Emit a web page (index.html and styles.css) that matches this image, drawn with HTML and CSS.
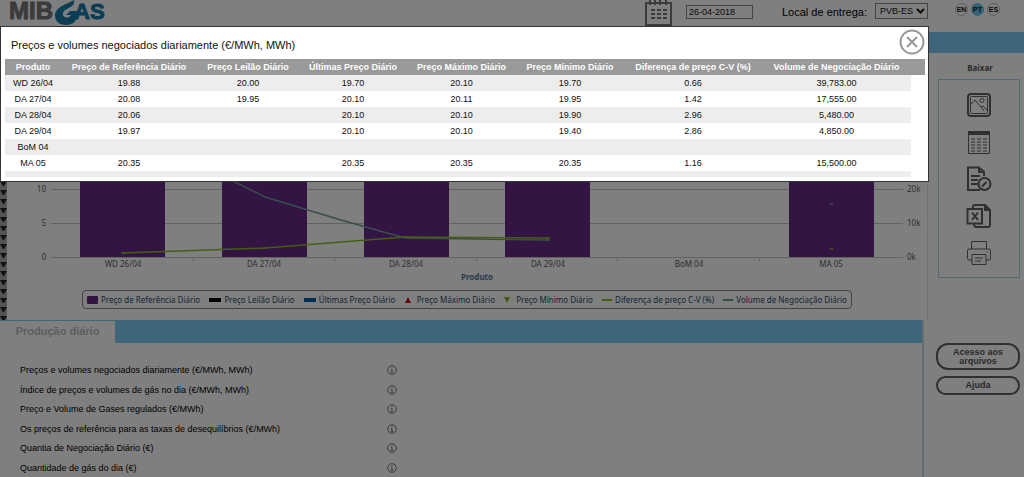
FILE: index.html
```html
<!DOCTYPE html>
<html lang="pt">
<head>
<meta charset="utf-8">
<title>MIBGAS</title>
<meta name="viewport" content="width=device-width, initial-scale=1">
<link rel="stylesheet" href="styles.css">
</head>
<body>
<div class="page">
  <header class="header">
    <a class="logo" href="#" aria-label="MIBGAS">
      <svg class="logo-svg" viewBox="0 0 110 30" aria-hidden="true">
        <text class="logo-grey" x="0" y="19">MIB</text>
        <text class="logo-blue" x="65" y="19">AS</text>
        <path class="logo-drop" d="M65 0C58 4 46 7 46 15.500C46 21 50 25 57 25C63 25 67 22 68 17L69 11H61L57 15H62C60 18 58 18 56 17C52 15 54 11 58 9C62 7 66 5 65 0Z"/>
      </svg>
    </a>
    <div class="filters">
      <svg class="calendar" viewBox="0 0 27 27" aria-hidden="true">
        <path class="stroke" d="M1 3H26V25H1ZM5 0V5M10 0V5M15 0V5M21 0V5"/>
        <path class="dots" d="M6 10H22M6 14H22M6 18H22"/>
      </svg>
      <input class="date" type="text" value="26-04-2018" aria-label="Data">
      <label class="place-label" for="place">Local de entrega:</label>
      <div class="place-box">
        <select class="place" id="place"><option>PVB-ES</option></select>
        <svg class="chevron" viewBox="0 0 9 6" aria-hidden="true"><path d="M1 1L4.500 4.500L8 1"/></svg>
      </div>
    </div>
    <nav class="langs"><a class="lang" href="#">EN</a><a class="lang lang-on" href="#">PT</a><a class="lang" href="#">ES</a></nav>
  </header>
  <div class="band"></div>
  <div class="columns">
    <main class="main">
      <section class="chart-area">
        <svg class="strip" aria-hidden="true"><defs><pattern id="hatch" width="7" height="9" patternUnits="userSpaceOnUse"><rect class="strip-bg" width="7" height="9"/><path class="strip-mark" d="M0 2H7L4 7H3Z"/></pattern></defs><rect width="7" height="100%" fill="url(#hatch)"/></svg>
        <div class="chart">
          <svg class="plot" viewBox="0 0 920 231" role="img" aria-label="Preços e volumes por produto">
            <path class="grid" d="M44 136.500H896M44 170.500H896M44 204.500H896M186.500 205V208M327.500 205V208M469.500 205V208M610.500 205V208M752.500 205V208"/>
            <path class="bar" d="M73 68H158V204H73ZM215 68H300V204H215ZM357 68H442V204H357ZM498 68H583V204H498ZM782 68H867V204H782Z"/>
            <path class="volume" d="M116 68L222 126L258 144L334 167L398 185L541 187"/>
            <path class="spread" d="M116 200L258 195L398 184L541 185"/>
            <path class="spread" d="M114 200H118M256 195H260M396 184H400M539 185H543M823 196H826"/>
            <path class="volume" d="M823 151H826M539 187H543"/>
            <g class="axis axis-left"><text x="39" y="139">10</text><text x="39" y="173">5</text><text x="39" y="207">0</text></g>
            <g class="axis"><text x="900" y="139">20k</text><text x="900" y="173">10k</text><text x="900" y="207">0k</text></g>
            <g class="axis axis-mid"><text x="116" y="214">WD 26/04</text><text x="257" y="214">DA 27/04</text><text x="399" y="214">DA 28/04</text><text x="541" y="214">DA 29/04</text><text x="682" y="214">BoM 04</text><text x="824" y="214">MA 05</text></g>
            <text class="axis-title" x="470" y="227">Produto</text>
          </svg>
          <ul class="legend">
            <li class="key"><i class="box"></i>Preço de Referência Diário</li>
            <li class="key"><i class="dash black"></i>Preço Leilão Diário</li>
            <li class="key"><i class="dash blue"></i>Últimas Preço Diário</li>
            <li class="key gap"><i class="up"></i>Preço Máximo Diário</li>
            <li class="key gap"><i class="down"></i>Preço Mínimo Diário</li>
            <li class="key"><i class="line green"></i>Diferença de preço C-V (%)</li>
            <li class="key"><i class="line slate"></i>Volume de Negociação Diário</li>
          </ul>
        </div>
      </section>
      <section class="reports">
        <div class="tabs"><h2 class="tab">Produção diário</h2></div>
        <ul class="list">
          <li class="item"><a class="item-link" href="#">Preços e volumes negociados diariamente (€/MWh, MWh)</a><svg class="info" viewBox="0 0 10 10"><use href="#info"/></svg></li>
          <li class="item"><a class="item-link" href="#">Índice de preços e volumes de gás no dia (€/MWh, MWh)</a><svg class="info" viewBox="0 0 10 10"><use href="#info"/></svg></li>
          <li class="item"><a class="item-link" href="#">Preço e Volume de Gases regulados (€/MWh)</a><svg class="info" viewBox="0 0 10 10"><use href="#info"/></svg></li>
          <li class="item"><a class="item-link" href="#">Os preços de referência para as taxas de desequilíbrios (€/MWh)</a><svg class="info" viewBox="0 0 10 10"><use href="#info"/></svg></li>
          <li class="item"><a class="item-link" href="#">Quantia de Negociação Diário (€)</a><svg class="info" viewBox="0 0 10 10"><use href="#info"/></svg></li>
          <li class="item"><a class="item-link" href="#">Quantidade de gás do dia (€)</a><svg class="info" viewBox="0 0 10 10"><use href="#info"/></svg></li>
        </ul>
      </section>
    </main>
    <aside class="side">
      <h3 class="side-title">Baixar</h3>
      <div class="downloads">
        <button class="dl" aria-label="Imagem"><svg class="dl-svg" viewBox="0 0 26 26"><rect class="stroke" x="2" y="2" width="22" height="22" rx="3"/><rect class="thin" x="4.500" y="4.500" width="17" height="17" rx="1"/><circle class="thin" cx="16" cy="8.500" r="2"/><path class="thin" d="M5 12L9 8L15 15L17 14L21 18M15 15L18 19"/></svg></button>
        <button class="dl" aria-label="Tabela"><svg class="dl-svg" viewBox="0 0 26 26"><path class="solid" d="M2 2H24V6H2Z"/><path class="thin" d="M2.500 2V24.500H23.500V2"/><path class="cells" d="M5 10H21M5 13H21M5 16H21M5 19H21M5 22H21"/></svg></button>
        <button class="dl" aria-label="Documento"><svg class="dl-svg" viewBox="0 0 26 26"><path class="stroke" d="M18 10V6L13 1.500H2V24H14M13 2V6H18M5 10H14M5 14H12M5 18H12"/><circle class="stroke" cx="18.500" cy="18" r="6"/><path class="stroke" d="M16 20.500L20.500 16"/></svg></button>
        <button class="dl" aria-label="Excel"><svg class="dl-svg" viewBox="0 0 26 26"><path class="stroke" d="M7 6V4Q7 2 9 2H19L24 7V22Q24 24 22 24H10Q8 24 8 21"/><path class="solid" d="M18 1V8H25Z"/><path class="stroke" d="M1.500 6H16V20.500H1.500Z"/><path class="xls" d="M6 9.500L12 17M12 9.500L6 17"/></svg></button>
        <button class="dl" aria-label="Imprimir"><svg class="dl-svg" viewBox="0 0 26 26"><path class="thin" d="M5.500 9V1.500H20.500V9M6 20H3Q1.500 20 1.500 18.500V10.500Q1.500 9 3 9H23Q24.500 9 24.500 10.500V18.500Q24.500 20 23 20H20M6 14.500H20V24.500H6ZM9 18H17M9 21H15M21 12H22"/></svg></button>
      </div>
      <div class="actions"><button class="pill">Acesso aos arquivos</button><button class="pill">Ajuda</button></div>
    </aside>
  </div>
</div>
<svg class="sprite" aria-hidden="true"><symbol id="info" viewBox="0 0 10 10"><circle class="info-line" cx="5" cy="5" r="4.300"/><path class="info-line" d="M5 2V3M4 4.300H5V7.500M3.800 7.500H6.200"/></symbol></svg>
<div class="overlay"></div>
<div class="modal" role="dialog" aria-labelledby="modal-title">
  <button class="close" aria-label="Fechar"><svg class="close-svg" viewBox="0 0 26 26"><circle cx="13" cy="13" r="11.500"/><path d="M8 8L18 18M18 8L8 18"/></svg></button>
  <h1 class="modal-title" id="modal-title">Preços e volumes negociados diariamente (€/MWh, MWh)</h1>
  <div class="scroller">
    <table class="prices">
      <colgroup><col class="c1"><col class="c2"><col class="c3"><col class="c4"><col class="c5"><col class="c6"><col class="c7"><col class="c8"><col class="c9"></colgroup>
      <thead><tr><th>Produto</th><th>Preço de Referência Diário</th><th>Preço Leilão Diário</th><th>Últimas Preço Diário</th><th>Preço Máximo Diário</th><th>Preço Mínimo Diário</th><th>Diferença de preço C-V (%)</th><th>Volume de Negociação Diário</th><td></td></tr></thead>
      <tbody>
        <tr><td>WD 26/04</td><td>19.88</td><td>20.00</td><td>19.70</td><td>20.10</td><td>19.70</td><td>0.66</td><td>39,783.00</td></tr>
        <tr><td>DA 27/04</td><td>20.08</td><td>19.95</td><td>20.10</td><td>20.11</td><td>19.95</td><td>1.42</td><td>17,555.00</td></tr>
        <tr><td>DA 28/04</td><td>20.06</td><td></td><td>20.10</td><td>20.10</td><td>19.90</td><td>2.96</td><td>5,480.00</td></tr>
        <tr><td>DA 29/04</td><td>19.97</td><td></td><td>20.10</td><td>20.10</td><td>19.40</td><td>2.86</td><td>4,850.00</td></tr>
        <tr><td>BoM 04</td><td></td><td></td><td></td><td></td><td></td><td></td><td></td></tr>
        <tr><td>MA 05</td><td>20.35</td><td></td><td>20.35</td><td>20.35</td><td>20.35</td><td>1.16</td><td>15,500.00</td></tr>
        <tr><td></td><td></td><td></td><td></td><td></td><td></td><td></td><td></td></tr>
      </tbody>
    </table>
  </div>
</div>
</body>
</html>
```
FILE: styles.css
```css
* { box-sizing: border-box; }
body {
  margin: 0;
  overflow: hidden;
  background: #fff;
  color: #111;
  font-family: "Liberation Sans", Arial, sans-serif;
  font-size: 9px;
}
button, input, select { font-family: inherit; color: inherit; }
ul { list-style: none; margin: 0; padding: 0; }
a { color: inherit; text-decoration: none; }
svg { display: block; }

.page { display: flex; flex-direction: column; min-height: 100vh; }
.header { display: flex; align-items: flex-start; height: 32px; padding-left: 9px; }
.logo-svg { width: 110px; height: 30px; overflow: visible; }
.logo-svg text { font-weight: 700; stroke-width: 1; }
.logo-grey { font-size: 24px; fill: #777; stroke: #777; }
.logo-blue { font-size: 22px; stroke: #1a7aa8; }
.logo-blue, .logo-drop { fill: #1a7aa8; }
.filters { display: flex; align-items: flex-start; margin-left: auto; }
.calendar { width: 27px; height: 27px; margin-right: 14px; }
.stroke { fill: none; stroke: #777; stroke-width: 2; }
.dots { stroke: #777; stroke-width: 2; stroke-dasharray: 4 2; }
.date { width: 67px; height: 14px; margin-top: 5px; padding: 0 2px; border: 1px solid #888; background: #fff; font-size: 9px; }
.place-label { margin: 5px 8px 0 29px; font-size: 11px; line-height: 14px; color: #000; }
.place-box { position: relative; margin-top: 3px; }
.place { display: block; appearance: none; width: 53px; height: 16px; padding: 0 0 0 4px; border: 1px solid #888; border-radius: 0; background: #fff; font-size: 9px; }
.chevron { position: absolute; top: 5px; right: 3px; width: 9px; height: 6px; fill: none; stroke: #111; stroke-width: 2; pointer-events: none; }
.langs { display: flex; justify-content: flex-start; gap: 3px; width: 96px; padding: 3px 0 0 27px; }
.lang { width: 13px; height: 13px; border: 1px solid #bbb; border-radius: 50%; font-size: 7px; font-weight: 700; line-height: 11px; text-align: center; }
.lang-on { background: #69c6ee; border-color: #69c6ee; }
.band { height: 21px; background: #7ecdf0; }

.columns { display: flex; flex: 1; }
.main { display: flex; flex-direction: column; flex: 1; min-width: 0; }
.chart-area { display: flex; border-right: 1px solid #e4e4e4; }
.strip { flex: none; width: 7px; height: 267px; }
.strip-bg { fill: #aaa; }
.strip-mark { fill: #222; }
.chart { flex: 1; min-width: 0; }
.plot { width: 100%; }
.grid { fill: none; stroke: #c4c4c4; }
.bar { fill: #662a86; }
.spread, .volume { fill: none; stroke-width: 1.5; }
.spread { stroke: #8bbc21; }
.volume { stroke: #7798a0; }
.axis text, .axis-title { font-family: "Noto Sans", "Open Sans", sans-serif; font-size: 8px; fill: #606060; }
.axis-left text { text-anchor: end; }
.axis-mid text, .axis-title { text-anchor: middle; }
.axis-title { fill: #4d759e; font-weight: 700; }
.legend { display: flex; align-items: center; justify-content: space-between; width: 770px; max-width: 100%; height: 19px; margin: 6px 0 11px 75px; padding: 0 4px; border: 1px solid #888; border-radius: 4px; font-family: "Noto Sans", "Open Sans", sans-serif; font-size: 8px; color: #274b6d; white-space: nowrap; }
.key { display: flex; align-items: center; gap: 3px; }
.key.gap { gap: 6px; }
.box { width: 11px; height: 8px; border-radius: 1px; background: #662a86; }
.dash { width: 12px; height: 4px; }
.black { background: #000; }
.blue { background: #0062a8; }
.up, .down { border: 3px solid transparent; }
.up { border-bottom: 6px solid #c00; border-top: 0; }
.down { border-top: 6px solid #7ab030; border-bottom: 0; }
.line { width: 10px; height: 2px; }
.green { background: #8bbc21; }
.slate { background: #7798a0; }

.reports { flex: 1; margin-right: 4px; border-right: 2px solid #c4dde8; }
.tabs { height: 23px; border-top: 1px solid #7ecdf0; background: #7ecdf0; }
.tab { width: 115px; height: 22px; margin: 0; background: #fff; color: #bbb; font-size: 11px; line-height: 21px; text-align: center; }
.list { padding: 17px 20px 0; color: #000; }
.item { display: flex; align-items: center; height: 20px; }
.item:nth-child(even) { height: 19px; }
.item-link { width: 367px; }
.info { width: 10px; height: 10px; }
.info-line { fill: none; stroke: #777; stroke-width: 1; }
.sprite { position: absolute; width: 0; height: 0; }

.side { width: 96px; padding: 9px 4px 0 8px; color: #555; }
.side-title { margin: 0 0 5px 4px; font-family: "Noto Sans", sans-serif; font-size: 8px; line-height: 12px; text-align: center; }
.downloads { display: flex; flex-direction: column; align-items: center; gap: 11px; height: 199px; margin-left: 2px; padding-top: 12px; border: 1px solid #a8d4e4; }
.dl { padding: 0; border: 0; background: none; }
.dl-svg { width: 26px; height: 26px; }
.downloads .stroke, .thin, .cells, .xls { fill: none; stroke: #606060; }
.downloads .stroke { stroke-width: 2; }
.cells { stroke-dasharray: 4 2; stroke-width: 1; }
.downloads .xls { stroke-width: 2; }
.solid { fill: #606060; }
.actions { display: flex; flex-direction: column; gap: 6px; margin-top: 65px; }
.pill { padding: 3px 12px 2px; border: 2px solid #606060; border-radius: 12px; background: none; font-size: 9px; font-weight: 700; line-height: 9px; }
.pill + .pill { padding: 3px 12px; }

.overlay { position: fixed; inset: 0; background: rgba(0, 0, 0, 0.5); }
.modal { position: absolute; top: 26px; left: 0; right: 95px; padding: 10px 3px 4px 4px; border: 1px solid #333; background: #fff; }
.modal-title { margin: 0 0 6px 6px; font-size: 11px; font-weight: 400; line-height: 16px; }
.close { position: absolute; top: 2px; right: 3px; padding: 0; border: 0; background: none; }
.close-svg { width: 26px; height: 26px; fill: none; stroke: #999; stroke-width: 2; }
.scroller { height: 118px; overflow: hidden; }
.prices { width: 100%; table-layout: fixed; border-collapse: collapse; font-size: 9px; line-height: 16px; text-align: center; white-space: nowrap; }
.prices th, .prices td { height: 16px; padding: 0; }
.prices thead { background: #999; color: #fff; }
.prices tbody tr:nth-child(odd) td { background: #ededed; }
.c1 { width: 56px; }
.c2 { width: 136px; }
.c3 { width: 102px; }
.c4 { width: 108px; }
.c5 { width: 109px; }
.c6 { width: 108px; }
.c7 { width: 138px; }
.c8 { width: 149px; }
.c9 { width: 14px; }
```
